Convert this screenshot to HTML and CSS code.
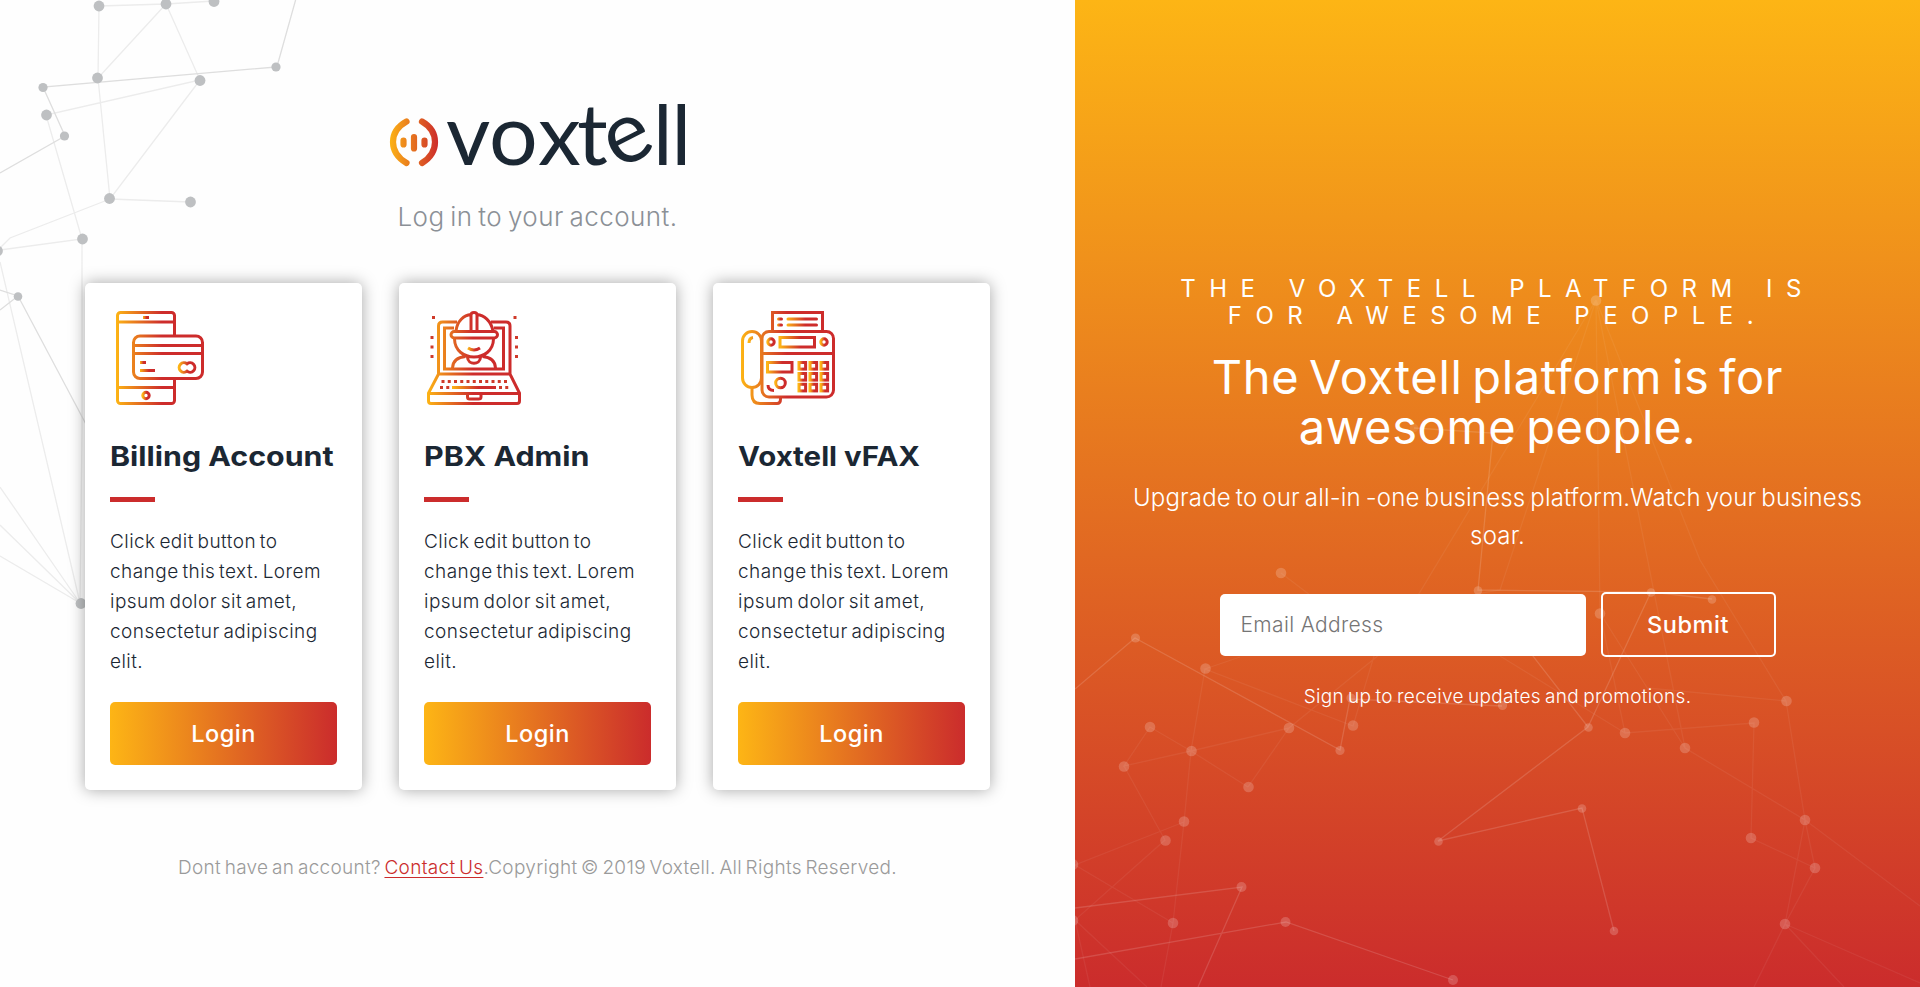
FILE: index.html
```
<!DOCTYPE html>
<html lang="en">
<head>
<meta charset="utf-8">
<title>Voxtell Login</title>
<link rel="stylesheet" href="styles.css">
</head>
<body>
<svg class="defs" width="0" height="0" aria-hidden="true">
  <defs>
    <linearGradient id="wide" gradientUnits="userSpaceOnUse" x1="0" y1="0" x2="46" y2="0"><stop offset="0" stop-color="#fdb515"/><stop offset="1" stop-color="#cd2c2b"/></linearGradient>
    <linearGradient id="small" x1="0" y1="0" x2=".6" y2="0"><stop offset="0" stop-color="#fdb515"/><stop offset="1" stop-color="#cd2c2b"/></linearGradient>
    <linearGradient id="mark" gradientUnits="userSpaceOnUse" x1="0" y1="0" x2="49" y2="0"><stop offset="0" stop-color="#fdb515"/><stop offset="1" stop-color="#cd2c2b"/></linearGradient>
    <rect id="key" width="6.6" height="6.6"/>
  </defs>
</svg>
<main class="page">
  <section class="login">
    <svg class="network network-grey" viewBox="0 0 1075 987">
      <path class="faint" d="M99 6L166 4L214 1M99 6L98 78L166 4L200 80L46 115L82 239L0 250M98 78L110 199L200 80M110 199L190 202M110 199L10 238L-3 251M82 239V430L80 603M0 262L80 603M0 487L80 603M0 525L80 603M0 556L80 603"/>
      <path d="M297 -5L278 63M276 67L43 87L65 136L0 173M0 290L18 296L0 310M18 296L88 428"/>
      <g><circle cx="99" cy="6" r="5.4"/><circle cx="166" cy="4" r="5.4"/><circle cx="214" cy="1.500" r="5.4"/><circle cx="276" cy="67" r="4.600"/><circle cx="97.500" cy="78" r="5.4"/><circle cx="200" cy="80.500" r="5.4"/><circle cx="43" cy="87.500" r="4.600"/><circle cx="46.500" cy="115" r="5.4"/><circle cx="64.500" cy="136" r="4.600"/><circle cx="109.500" cy="198.500" r="5.4"/><circle cx="190.500" cy="202" r="5.4"/><circle cx="82.500" cy="239" r="5.4"/><circle cx="-2.500" cy="251" r="5.4"/><circle cx="18" cy="296.500" r="4.300"/><circle cx="81" cy="603.500" r="5.4"/></g>
    </svg>
    <header class="brand">
      <svg class="logo" viewBox="0 0 298 66" role="img" aria-label="voxtell">
        <g fill="none" stroke="url(#mark)" stroke-width="6.200" stroke-linecap="round">
          <path d="M17.500 18.500Q4 26 4 39Q4 52 17.500 60"/>
          <path d="M33 18.500Q46 26 46 39Q46 52 33 60"/>
          <path d="M14.500 37.500V41.500M25 34V45.500M35.500 37.500V41.500"/>
        </g>
        <text class="wordmark" x="57 100 149 188 229 264 282.500" y="61.500 61.500 61.500 61.500 67 61.500 61.500" rotate="0 0 0 0 -27 0 0">voxte<tspan class="stem">ll</tspan></text>
      </svg>
      <p class="tagline">Log in to your account.</p>
    </header>
    <div class="cards">
      <article class="card">
        <svg class="icon icon-phone" viewBox="0 0 94 94">
          <g class="line"><rect x="1.500" y="1.500" width="57" height="91" rx="3"/><path d="M2 11H58M2 76.500H58"/><rect x="17.500" y="25" width="69" height="42.500" rx="6.500" fill="#fff"/><path d="M18 34.500H87M18 42.500H87"/></g>
          <g fill="url(#small)"><rect x="27" y="5" width="6" height="3"/><rect x="24" y="50" width="6" height="3"/><rect x="24" y="58" width="15" height="3"/></g>
          <g class="bit"><circle cx="30" cy="84.500" r="3.200"/><path d="M71 52.800a4.800 4.800 0 1 0 0 7.400a4.800 4.800 0 1 0 0-7.400z"/></g>
        </svg>
        <h2>Billing Account</h2>
        <span class="rule"></span>
        <p>Click edit button to<br>change this text. Lorem<br>ipsum dolor sit amet,<br>consectetur adipiscing<br>elit.</p>
        <a class="button">Login</a>
      </article>
      <article class="card">
        <svg class="icon icon-laptop" viewBox="0 0 94 94">
          <g class="line">
            <path d="M11.500 63V15Q11.500 11 15.500 11H30M64 11H79Q83 11 83 15V63M11.500 63H83L92.500 82V90Q92.500 92.500 90 92.500H4Q1.500 92.500 1.500 90V82ZM2 82.500H92"/>
            <path d="M27 17H17.500V58H76.500V17H67"/>
            <path d="M29 20C30 10 37 4 44 3.500M50 3.500C57 4 64 10 66 20M44 20V4Q44 1.500 47 1.500Q50 1.500 50 4V20"/>
            <rect x="24" y="20.500" width="46.500" height="6.500" rx="3.200"/>
            <path d="M27.500 28C28 52 66 52 66.500 28M25.500 57C26 49 31 46 38.500 45.500M55.500 45.500C63 46 68 49 68.500 57M40.500 46.500C41 54 53 54 53.500 46.500M40.500 83V86Q40.500 88 42.500 88H51.500Q54 88 54 86V83"/>
          </g>
          <path class="bit" d="M41 37Q47 41 53 37"/>
          <rect x="25" y="75" width="44" height="3" fill="url(#small)"/>
          <path class="dots" d="M14.500 70.500H83" stroke-dasharray="3 3.250"/>
          <path class="dots" d="M13 76.500H23M72 76.500H82" stroke-dasharray="3 3.250"/>
          <path class="dots" d="M5 6.500H8M86.500 6.500H89.500M3.500 26.500H6.500M3.500 36H6.500M3.500 45.500H6.500M88 26.500H91M88 36H91M88 45.500H91"/>
        </svg>
        <h2>PBX Admin</h2>
        <span class="rule"></span>
        <p>Click edit button to<br>change this text. Lorem<br>ipsum dolor sit amet,<br>consectetur adipiscing<br>elit.</p>
        <a class="button">Login</a>
      </article>
      <article class="card">
        <svg class="icon icon-fax" viewBox="0 0 94 94">
          <g class="line"><path d="M31.500 20V1.500H81.500V20"/><rect x="21" y="20.500" width="71.500" height="65.500" rx="7"/><path d="M21 42.500H92"/><rect x="1.500" y="20.500" width="19" height="56" rx="9.500"/><path d="M11 77V84Q11 92.500 19 92.500H36Q39.500 92.500 39.500 88V86"/></g>
          <g fill="url(#small)"><rect x="36" y="6.500" width="6" height="3" rx="1.500"/><rect x="45.500" y="6.500" width="31.500" height="3" rx="1.500"/><rect x="36" y="12.500" width="6" height="3" rx="1.500"/><rect x="45.500" y="12.500" width="31.500" height="3" rx="1.500"/></g>
          <g class="bit"><circle cx="30" cy="31" r="3.200"/><circle cx="83" cy="31" r="3.200"/><rect x="39" y="26.500" width="34.500" height="9.500"/><rect x="26.500" y="51.500" width="24.500" height="9.500"/><circle cx="39.500" cy="72" r="4.800"/><path d="M27 74Q27 79.500 33 79.500M8 32Q8 27 12 26.500"/>
            <use href="#key" x="58" y="51.500"/><use href="#key" x="69" y="51.500"/><use href="#key" x="80" y="51.500"/><use href="#key" x="58" y="62.500"/><use href="#key" x="69" y="62.500"/><use href="#key" x="80" y="62.500"/><use href="#key" x="58" y="73.300"/><use href="#key" x="69" y="73.300"/><use href="#key" x="80" y="73.300"/></g>
        </svg>
        <h2 class="narrow">Voxtell vFAX</h2>
        <span class="rule"></span>
        <p>Click edit button to<br>change this text. Lorem<br>ipsum dolor sit amet,<br>consectetur adipiscing<br>elit.</p>
        <a class="button">Login</a>
      </article>
    </div>
    <footer class="legal">Dont have an account? <a>Contact Us</a>.Copyright © 2019 Voxtell. All Rights Reserved.</footer>
  </section>
  <section class="promo">
    <svg class="network network-white" viewBox="1075 0 845 987">
      <path class="faint" d="M1596 300L1385 650L1289 728L1248 787M1596 300L1500 590L1440 600L1374 656L1353 726L1205 669L1240 657M1596 300L1600 613L1625 733L1754 723L1751 838L1815 868L1785 924L1754 987M1596 300L1685 748L1805 820L1920 906M1596 300L1700 560L1786 701L1805 820L1785 924M1805 820L1815 868M1786 701L1647 688M1600 613L1685 748M1281 573L1310 595M1500 656L1625 733M1205 669L1191 751L1184 822L1173 923L1161 987M1191 751L1289 728M1191 751L1248 787M1191 751L1150 727L1124 766L1191 751M1124 766L1165 840L1075 920L1147 987M1184 822L1075 865L1173 923M1075 920L1090 987M1785 924L1920 983M1785 924L1844 987"/>
      <path d="M1075 689L1135 638L1340 750L1350 699L1502 706M1414 428L1493 433L1478 590L1651 592L1712 599M1651 592L1588 727L1438 841L1582 808L1614 931M1588 727L1505 620M1075 908L1242 887L1198 987M1075 959L1286 922L1453 980"/>
      <g><circle cx="1596" cy="300.500" r="5.300"/><circle cx="1281" cy="573" r="5.300"/><circle cx="1600" cy="613.500" r="5.300"/><circle cx="1205.500" cy="668.500" r="5.300"/><circle cx="1150" cy="727" r="5.300"/><circle cx="1191.500" cy="751" r="5.300"/><circle cx="1124" cy="766.500" r="5.300"/><circle cx="1289" cy="728" r="5.300"/><circle cx="1353" cy="725.500" r="5.300"/><circle cx="1248.500" cy="787" r="5.300"/><circle cx="1184" cy="821.500" r="5.300"/><circle cx="1165.500" cy="840.500" r="5.300"/><circle cx="1073" cy="864.500" r="5.300"/><circle cx="1073" cy="920.500" r="5.300"/><circle cx="1173" cy="923" r="5.300"/><circle cx="1625" cy="733" r="5.300"/><circle cx="1685" cy="748" r="5.300"/><circle cx="1754" cy="722.500" r="5.300"/><circle cx="1786.500" cy="701" r="5.300"/><circle cx="1805" cy="820" r="5.300"/><circle cx="1751" cy="838" r="5.300"/><circle cx="1815" cy="868" r="5.300"/><circle cx="1785" cy="924" r="5.300"/>
      <circle cx="1241.500" cy="887" r="5"/><circle cx="1285.500" cy="922" r="5"/><circle cx="1453" cy="980" r="5"/><circle cx="1135.500" cy="638" r="4.600"/><circle cx="1340" cy="750.500" r="4.600"/><circle cx="1351" cy="698" r="4.600"/><circle cx="1502.500" cy="705.500" r="4.600"/><circle cx="1588.500" cy="727.500" r="4.300"/><circle cx="1438.500" cy="841.500" r="4.300"/><circle cx="1582" cy="808.500" r="4.300"/><circle cx="1614" cy="931" r="4.300"/><circle cx="1478" cy="590.500" r="4.300"/><circle cx="1651" cy="592.500" r="4.300"/><circle cx="1712" cy="599.500" r="4.300"/><circle cx="1414" cy="428" r="4.300" opacity=".5"/></g>
    </svg>
    <h3 class="eyebrow">THE VOXTELL PLATFORM IS<br>FOR AWESOME PEOPLE.</h3>
    <h1>The Voxtell platform is for<br>awesome people.</h1>
    <p class="lead">Upgrade to our all-in -one business platform.Watch your business<br>soar.</p>
    <form class="signup">
      <input type="email" placeholder="Email Address">
      <button type="button">Submit</button>
    </form>
    <p class="note">Sign up to receive updates and promotions.</p>
  </section>
</main>
</body>
</html>
```
FILE: styles.css
```
* { box-sizing: border-box; }
body { margin: 0; font-family: Inter, "Liberation Sans", sans-serif; font-weight: 300; color: #1b2733; }
h1, h2, h3, p { margin: 0; white-space: nowrap; }
.defs { position: absolute; }
.page { display: flex; height: 987px; overflow: hidden; }

.login { position: relative; width: 1075px; background: #fefefe; display: flex; flex-direction: column; align-items: center; padding-top: 103px; }
.network { position: absolute; left: 0; top: 0; width: 100%; height: 100%; }
.network path { fill: none; stroke-width: 1.300; }
.network-grey path { stroke: #dedede; }
.network-grey path.faint { stroke: #ececec; }
.network-grey g { fill: #bec0c2; }
.network-white path { stroke: rgba(255, 255, 255, .14); }
.network-white path.faint { stroke: rgba(255, 255, 255, .06); }
.network-white g { fill: rgba(255, 255, 255, .19); }
.login > :not(.network), .promo > :not(.network) { position: relative; }

.brand { display: flex; flex-direction: column; align-items: center; }
.logo { width: 298px; height: 66px; overflow: visible; }
.wordmark { font-family: Lato, sans-serif; font-size: 86px; font-weight: 400; fill: #1b2733; }
.wordmark .stem { font-size: 83px; }
.tagline { margin-top: 31px; font-size: 26px; line-height: 34px; letter-spacing: .45px; word-spacing: -2px; color: #8b9096; }

.cards { display: flex; gap: 37px; margin-top: 49px; }
.card { width: 277px; height: 507px; padding: 28px 25px 25px; background: #fff; border-radius: 5px; box-shadow: 0 0 16px rgba(0, 0, 0, .35); display: flex; flex-direction: column; align-items: flex-start; }
.icon { width: 94px; height: 94px; margin-left: 6px; overflow: visible; }
.icon-laptop { margin-left: 3px; }
.icon-fax { margin-left: 3px; }
.line { fill: none; stroke: url(#wide); stroke-width: 3; }
.bit { fill: none; stroke: url(#small); stroke-width: 3; }
.dots { fill: none; stroke: #cf3a2a; stroke-width: 3; }
.card h2 { margin-top: 36px; font-size: 27px; line-height: 32px; font-weight: 700; transform: scaleX(1.125); transform-origin: left; }
.card h2.narrow { transform: scaleX(1.09); }
.rule { width: 45px; height: 5px; margin-top: 24px; background: #cb2c2c; }
.card p { margin-top: 25px; font-size: 19px; line-height: 30px; letter-spacing: .45px; word-spacing: -2px; }
.button { margin-top: 25px; width: 227px; height: 63px; border-radius: 5px; background: linear-gradient(90deg, #fdb515, #cb2c2c); color: #fff; font-size: 23.500px; line-height: 64px; font-weight: 500; letter-spacing: .5px; text-align: center; }
.legal { margin-top: 63px; font-size: 19px; line-height: 30px; letter-spacing: .3px; word-spacing: -2px; color: #9a9a9a; white-space: nowrap; }
.legal a { color: #cb2c2c; text-decoration: underline; text-underline-offset: 3px; }

.promo { position: relative; width: 845px; background: linear-gradient(180deg, #fdb515, #cb2c2c); color: #fff; display: flex; flex-direction: column; align-items: center; text-align: center; padding-top: 275px; }
.eyebrow { font-size: 24px; line-height: 27px; font-weight: 400; letter-spacing: 13.500px; }
h1 { margin-top: 23px; font-size: 47px; line-height: 50px; font-weight: 400; letter-spacing: .650px; word-spacing: -4px; }
.lead { margin-top: 27px; font-size: 24px; line-height: 38px; letter-spacing: .18px; word-spacing: -2px; }
.signup { display: flex; align-items: center; gap: 15px; margin-top: 37px; }
.signup input { width: 366px; height: 62px; padding: 0 21px; border: 0; border-radius: 5px; font: 300 21px Inter, sans-serif; letter-spacing: .35px; }
.signup input::placeholder { color: #757575; }
.signup button { width: 175px; height: 65px; border: 2px solid #fff; border-radius: 5px; background: none; color: #fff; font: 500 23.500px Inter, sans-serif; letter-spacing: .6px; }
.note { margin-top: 25px; font-size: 19px; line-height: 30px; letter-spacing: .3px; word-spacing: -1.500px; }
```
